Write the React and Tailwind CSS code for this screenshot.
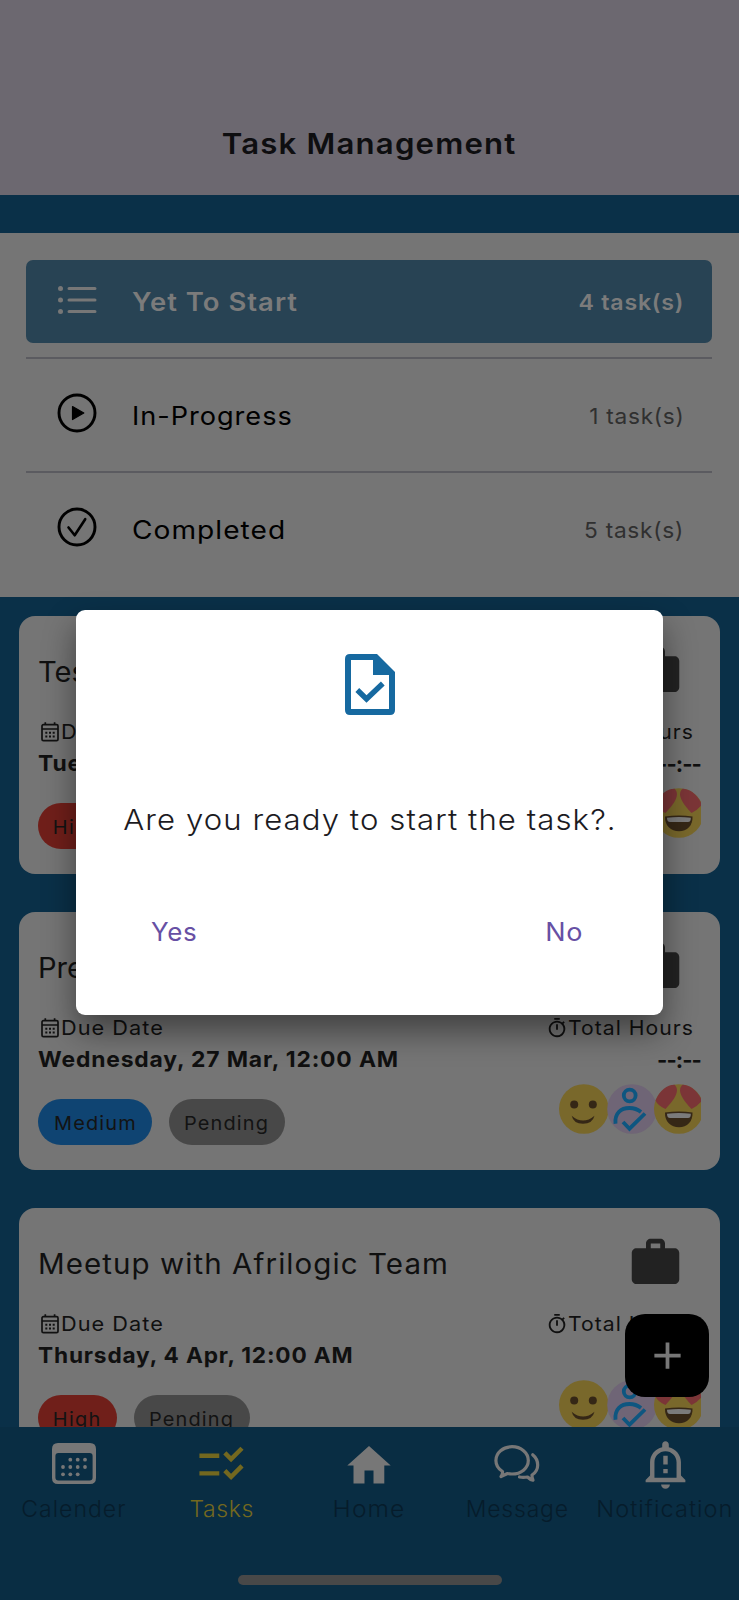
import { MdWork, MdChecklistRtl, MdOutlineNotificationImportant, MdAdd, MdOutlineTimer } from "react-icons/md";

function ListIcon() {
  return (
    <svg width="46" height="46" viewBox="-23 -23 46 46" className="mb-[4px] shrink-0" fill="#777">
      <circle cx="-16.500" cy="-11.600" r="2.500" />
      <circle cx="-16.500" cy="0" r="2.500" />
      <circle cx="-16.500" cy="11.400" r="2.500" />
      <path d="M-8 -11.600H18M-8 0H18M-8 11.400H18" stroke="#777" strokeWidth="3" strokeLinecap="round" />
    </svg>
  );
}

function PlayIcon() {
  return (
    <svg width="46" height="46" viewBox="-23 -23 46 46" className="mb-[4px] shrink-0">
      <circle r="18" fill="none" stroke="#000" strokeWidth="2.900" />
      <path d="M-4.500 -6.500L6.800 0L-4.500 6.500Z" stroke="#000" strokeWidth="1.200" strokeLinejoin="round" />
    </svg>
  );
}

function CheckIcon() {
  return (
    <svg width="46" height="46" viewBox="-23 -23 46 46" className="mb-[4px] shrink-0" fill="none" stroke="#000">
      <circle r="18" strokeWidth="2.900" />
      <path d="M-8.500 0.500L-2.300 8.300L8.200 -7.800" strokeWidth="2.600" strokeLinecap="round" strokeLinejoin="round" />
    </svg>
  );
}

function CalendarSmall() {
  return (
    <svg width="18" height="20" viewBox="0 0 18 20" fill="none" stroke="#111" strokeWidth="1.7" className="shrink-0">
      <rect x="1" y="2.6" width="16" height="16" rx="1.4" />
      <path d="M1 7H17M4.3 0.2V3M13.6 0.2V3" />
      <path d="M4.3 10.8h2M8 10.8h2M11.700 10.8h2M4.3 14.6h2M8 14.6h2M11.700 14.6h2" strokeWidth="2" />
    </svg>
  );
}

function Smile() {
  return (
    <svg width="50" height="50" viewBox="0 0 50 50" className="absolute left-0 top-0">
      <circle cx="24.800" cy="25" r="24.8" fill="#79682b" />
      <circle cx="15.2" cy="20.5" r="4" fill="#352716" />
      <circle cx="33.8" cy="20.5" r="4" fill="#352716" />
      <path d="M12.700 31.700Q24 41.500 35.500 31.700Q33.500 39.700 24 39.700Q14.500 39.700 12.700 31.700Z" fill="#352716" />
    </svg>
  );
}

function PersonCheck() {
  return (
    <svg width="50" height="50" viewBox="0 0 50 50" className="absolute left-[47.5px] top-0">
      <circle cx="25" cy="25" r="24.8" fill="#6f6576" />
      <g fill="none" stroke="#0e5680" strokeWidth="3.800">
        <circle cx="22.700" cy="11.500" r="5.900" />
        <path d="M8.500 39.700C7.500 29 14 24 22.500 24Q29 24 34 28" />
        <path d="M16 38L22.500 44.700L38 29.500" />
      </g>
    </svg>
  );
}

function HeartEyes() {
  return (
    <svg width="47" height="50" viewBox="0 0 47 50" className="absolute left-[95px] top-0">
      <circle cx="24.800" cy="25" r="24.8" fill="#79682b" />
      <path d="M1.500 16.500C6 6 13 1 20.500 0.800C25 5 24 12 11.500 25Q4 22 1.500 16.500Z" fill="#7b3537" />
      <path d="M48 16.500C43 6 36 1 28.500 0.800C24 5 25 12 37.500 25Q44 22 48 16.500Z" fill="#7b3537" />
      <path d="M11 28.500Q25 26.700 38.500 28.500C39 37.500 33 43.300 25 43.300S10.500 37.500 11 28.500Z" fill="#352716" />
      <path d="M13 29.800Q25 28.300 36.800 29.800Q37 34 34 34H16Q13 34 13 29.800Z" fill="#7b7b7b" />
    </svg>
  );
}

function Chip({ label, className }) {
  return (
    <div className={"flex h-[45.5px] items-center justify-center rounded-full pt-[4px] text-[19px] text-[#131313] " + className}>
      <span className="scale-x-[1.05]">{label}</span>
    </div>
  );
}

function TaskCard({ title, titleClass, date, dateClass, priority, priorityClass }) {
  return (
    <section className="h-[258px] shrink-0 rounded-2xl bg-[#757575] pl-[19px] text-[#101010]">
      <div className="flex h-[101px] justify-between pr-[36px] pt-[26px]">
        <h2 className={"origin-left pt-[12px] text-[28px] leading-[36px] " + titleClass}>{title}</h2>
        <MdWork size={57} color="#222222" className="shrink-0" />
      </div>
      <div className="flex justify-between pr-[18px]">
        <div>
          <div className="flex h-[30px] items-center gap-[2px] pl-[3px] text-[20px] tracking-[0.95px]">
            <CalendarSmall />
            <span className="origin-left scale-x-[1.085]">Due Date</span>
          </div>
          <div className={"h-[32px] origin-left whitespace-nowrap text-[22px] font-bold leading-[33px] " + dateClass}>{date}</div>
        </div>
        <div>
          <div className="flex h-[30px] items-center gap-[7.500px] pr-[8px] text-[20px] tracking-[0.95px]">
            <MdOutlineTimer size={22} />
            <span className="origin-right scale-x-[1.058]">Total Hours</span>
          </div>
          <div className="h-[32px] pr-px text-right text-[22px] font-bold leading-[34px] tracking-[-0.9px]">--:--</div>
        </div>
      </div>
      <div className="flex justify-between pr-[19px] pt-[9px]">
        <div className="flex gap-[17px] pt-[15px]">
          <Chip label={priority} className={priorityClass} />
          <Chip label="Pending" className="w-[115.500px] bg-[#484848] tracking-[1.1px]" />
        </div>
        <div className="relative h-[50px] w-[142px]">
          <Smile />
          <PersonCheck />
          <HeartEyes />
        </div>
      </div>
    </section>
  );
}

function NavItem({ label, className, children }) {
  return (
    <div className="flex w-[147.800px] flex-col items-center">
      <div className="flex h-[67.500px] items-center justify-center pt-[6px]">{children}</div>
      <span className={"whitespace-nowrap text-[23px] font-light leading-[28px] " + className}>{label}</span>
    </div>
  );
}

export default function App() {
  return (
    <div className="relative flex h-[1600px] w-[739px] flex-col overflow-hidden bg-[#0a3048] font-['Inter',sans-serif]">
      <header className="flex h-[195px] shrink-0 items-end justify-center bg-[#6c6870] pb-[33px]">
        <h1 className="scale-x-[1.075] text-[29px] font-semibold leading-[36px] tracking-[1.1px] text-[#0e0e10]">Task Management</h1>
      </header>

      <section className="mt-[38px] h-[364px] shrink-0 bg-[#757575] pl-[26px] pr-[27px] pt-[27px]">
        <div className="flex h-[83px] items-center rounded-[7px] bg-[#284354] pl-[28px] pr-[28px] text-[#7b7b7b]">
          <ListIcon />
          <span className="ml-[32px] origin-left scale-x-[1.1] pt-[2px] text-[25px] font-semibold tracking-[0.9px]">Yet To Start</span>
          <span className="ml-auto origin-right scale-x-[1.055] pt-[2px] text-[22px] font-semibold tracking-[0.7px]">4 task(s)</span>
        </div>
        <div className="mt-[14px] flex h-[114px] items-center border-t-2 border-[#5b5b60] pl-[28px] pr-[28px] text-black">
          <PlayIcon />
          <span className="ml-[32px] origin-left scale-x-[1.085] pt-[3px] text-[25px] tracking-[0.9px]">In-Progress</span>
          <span className="ml-auto origin-right scale-x-[1.03] pt-[3px] text-[22px] tracking-[0.7px] text-[#303030]">1 task(s)</span>
        </div>
        <div className="flex h-[114px] items-center border-t-2 border-[#5b5b60] pl-[28px] pr-[28px] text-black">
          <CheckIcon />
          <span className="ml-[32px] origin-left scale-x-[1.125] pt-[3px] text-[25px] tracking-[0.9px]">Completed</span>
          <span className="ml-auto origin-right scale-x-[1.03] pt-[3px] text-[22px] tracking-[0.7px] text-[#303030]">5 task(s)</span>
        </div>
      </section>

      <main className="flex h-[830px] shrink-0 flex-col gap-[38px] overflow-hidden px-[19px] pt-[19px]">
        <TaskCard title="Test Task" titleClass="scale-x-[1.04]" date="Tuesday, 26 Mar, 12:00 AM" dateClass="scale-x-[1.04] tracking-[0.8px]" priority="High" priorityClass="w-[79px] bg-[#701f1a] tracking-[1.2px]" />
        <TaskCard title="Presentation" titleClass="scale-x-[1.04]" date="Wednesday, 27 Mar, 12:00 AM" dateClass="scale-x-[1.04] tracking-[0.8px]" priority="Medium" priorityClass="w-[114px] bg-[#0f4472] tracking-[1.1px]" />
        <TaskCard title="Meetup with Afrilogic Team" titleClass="scale-x-[1.055] tracking-[1px]" date="Thursday, 4 Apr, 12:00 AM" dateClass="scale-x-[1.03] tracking-[0.8px]" priority="High" priorityClass="w-[79px] bg-[#701f1a] tracking-[1.2px]" />
      </main>

      <nav className="relative flex h-[173px] shrink-0 bg-[#092d43]">
        <NavItem label="Calender" className="tracking-[1px] text-[#061c2b]">
          <svg width="44" height="41" viewBox="0 0 44 41">
            <path fillRule="evenodd" fill="#777" d="M6 0H38Q44 0 44 6V35Q44 41 38 41H6Q0 41 0 35V6Q0 0 6 0ZM6.400 10Q3.400 10 3.400 13V34.500Q3.400 37.500 6.400 37.500H37.600Q40.600 37.500 40.600 34.500V13Q40.600 10 37.600 10Z" />
            <g fill="#777">
              <circle cx="18.300" cy="16.700" r="1.900" /><circle cx="25.700" cy="16.700" r="1.900" /><circle cx="33" cy="16.700" r="1.900" />
              <circle cx="11" cy="24" r="1.900" /><circle cx="18.300" cy="24" r="1.900" /><circle cx="25.700" cy="24" r="1.900" /><circle cx="33" cy="24" r="1.900" />
              <circle cx="11" cy="31.300" r="1.900" /><circle cx="18.300" cy="31.300" r="1.900" /><circle cx="25.700" cy="31.300" r="1.900" />
            </g>
          </svg>
        </NavItem>
        <NavItem label="Tasks" className="text-[#73681f] tracking-[0.6px]">
          <MdChecklistRtl size={53} color="#73681f" className="mt-[2px]" />
        </NavItem>
        <NavItem label="Home" className="scale-x-[1.07] tracking-[1px] text-[#061c2b]">
          <svg width="44" height="38" viewBox="0 0 44 38" fill="#777" className="mt-[2px]">
            <path d="M22 0L43.700 19.400H37.300V37.500H26.500V24.500H17.500V37.500H6.500V19.400H0.300Z" />
          </svg>
        </NavItem>
        <NavItem label="Message" className="tracking-[0.8px] text-[#061c2b]">
          <svg width="46" height="38" viewBox="0 0 46 38" fill="none" stroke="#777" strokeWidth="3.200" strokeLinejoin="round" strokeLinecap="round">
            <path d="M8.500 26.500C4.500 24 1.900 20 1.900 15.500C1.900 7.800 9 1.700 18 1.700S34.300 7.800 34.300 15.500S27 29 18 29Q15.500 29 13.500 28.500L7 31.500Q8.800 29.500 8.500 26.500Z" />
            <path d="M38.700 9.800C42 12.500 43.700 16 43.700 20C43.700 24 41.500 27.800 38 30Q37.800 32.500 39 35.200Q36 34.500 33.500 32Q29 32.800 25.500 32" />
          </svg>
        </NavItem>
        <NavItem label="Notification" className="scale-x-[1.025] tracking-[1px] text-[#061c2b]">
          <MdOutlineNotificationImportant size={53} color="#777" className="mt-[2px]" />
        </NavItem>
        <div className="absolute bottom-[15px] left-[238px] h-[10px] w-[264px] rounded-full bg-[#484848]" />
      </nav>

      <button className="absolute left-[625px] top-[1314px] flex h-[83px] w-[84px] items-center justify-center rounded-[20px] bg-black">
        <MdAdd size={45} color="#777" />
      </button>

      <div role="dialog" className="absolute left-[76px] top-[609.500px] flex h-[405.500px] w-[587px] flex-col items-center rounded-[9px] bg-white pt-[44px] shadow-[0_16px_32px_rgba(0,0,0,0.45)]">
        <svg width="50" height="61" viewBox="0 0 50 61">
          <path fillRule="evenodd" fill="#1669a0" d="M5 0H32L50 18V56Q50 61 45 61H5Q0 61 0 56V5Q0 0 5 0ZM6 6V55H44V21H28V6Z" />
          <path d="M12.300 36L21.500 45L37.800 29.500" fill="none" stroke="#1669a0" strokeWidth="5.400" />
        </svg>
        <p className="mt-[87.500px] scale-x-[1.073] whitespace-nowrap text-[29px] font-light leading-[36px] tracking-[1px] text-[#1c1b1f]">Are you ready to start the task?.</p>
        <div className="mt-[78px] flex w-full justify-between pl-[75px] pr-[80px] text-[25px] leading-[32px] tracking-[0.6px] text-[#6750a4]">
          <button className="origin-left scale-x-[1.04]">Yes</button>
          <button className="origin-right scale-x-[1.08]">No</button>
        </div>
      </div>
    </div>
  );
}
